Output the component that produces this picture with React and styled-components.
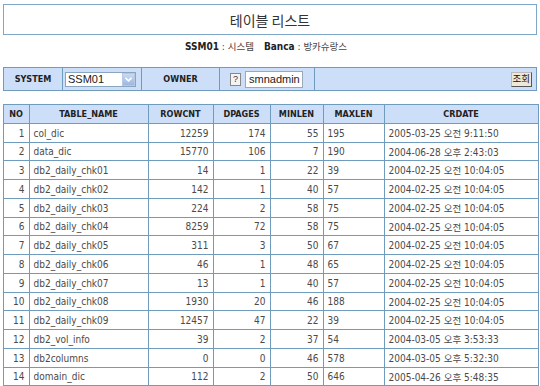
import React from "react";
import styled, { createGlobalStyle } from "styled-components";

const Global = createGlobalStyle`
  html, body { margin: 0; padding: 0; background: #fff; }
  body { font-family: "DejaVu Sans Condensed", "DejaVu Sans", "Noto Sans CJK KR", sans-serif; font-stretch: condensed; color: #333; }
`;

const Page = styled.div`
  padding: 4px 3px 0 3px;
  width: 534px;
`;

const TitleBox = styled.div`
  height: 29px;
  border: 1px solid #7ea6c6;
  display: flex;
  align-items: center;
  justify-content: center;
  font-family: "Noto Sans CJK KR", sans-serif;
  font-size: 14px;
  color: #333;
`;

const Sub = styled.div`
  height: 20px;
  margin-top: 1px;
  display: flex;
  align-items: center;
  justify-content: center;
  font-size: 10px;
  color: #444;
  padding-right: 8px;
  gap: 10px;
`;

const SubItem = styled.span`
  white-space: pre;
  b { font-weight: bold; color: #222; }
  span { font-family: "Noto Sans CJK KR", sans-serif; font-size: 9.5px; }
`;

const Bar = styled.div`
  margin-top: 11px;
  height: 22px;
  border: 1px solid #6f9bbd;
  background: #cddff8;
  display: grid;
  grid-template-columns: 58px 79px 78px 95px 1fr;
`;

const BarCell = styled.div`
  border-left: ${(p) => (p.$first ? "none" : "1px solid #6f9bbd")};
  display: flex;
  align-items: center;
  justify-content: ${(p) => p.$justify || "flex-start"};
  padding: ${(p) => p.$pad || "0"};
  font-size: 9px;
  font-weight: bold;
  color: #222;
  gap: 4px;
`;

const Select = styled.div`
  width: 71px;
  height: 15px;
  border: 1px solid #8aa5bd;
  background: #fff;
  display: flex;
  align-items: center;
  justify-content: space-between;
  font-family: "Liberation Sans", sans-serif;
  font-weight: normal;
  font-size: 11px;
  color: #222;
  padding-left: 2px;
  box-sizing: border-box;
`;

const DropBtn = styled.span`
  width: 13px;
  height: 13px;
  background: linear-gradient(#c9d9f2, #9db8e0);
  border: 1px solid #b5c8e6;
  box-sizing: border-box;
  display: flex;
  align-items: center;
  justify-content: center;
`;

const QIcon = styled.span`
  width: 11px;
  height: 13px;
  border: 1px solid #888;
  box-sizing: border-box;
  background: #f4f4f4;
  font-family: "Liberation Sans", sans-serif;
  font-weight: normal;
  font-size: 9px;
  line-height: 11px;
  text-align: center;
  color: #333;
`;

const Input = styled.div`
  width: 58px;
  height: 17px;
  box-sizing: border-box;
  border: 1px solid #9aa9b8;
  background: #fff;
  font-family: "Liberation Sans", sans-serif;
  font-weight: normal;
  font-size: 11px;
  color: #222;
  padding-left: 3px;
  display: flex;
  align-items: center;
`;

const Button = styled.span`
  box-sizing: border-box;
  height: 15px;
  padding: 0 1px;
  display: inline-flex;
  align-items: center;
  border: 1px solid #555;
  border-top-color: #bbb;
  border-left-color: #bbb;
  background: #ece9d8;
  font-family: "Noto Sans CJK KR", sans-serif;
  font-weight: normal;
  font-size: 9.5px;
  line-height: 1;
  color: #111;
`;

const Table = styled.table`
  margin-top: 13px;
  width: 535px;
  border-collapse: collapse;
  table-layout: fixed;
  margin-left: -0.5px;
`;

const Th = styled.th`
  height: 18px;
  padding: 0;
  border: 1px solid #6f9bbd;
  background: #cddff8;
  font-size: 9px;
  font-weight: bold;
  color: #222;
  text-align: center;
`;

const Row = styled.tr`
  height: ${(p) => (p.$tight ? "18px" : "19px")};
`;

const Td = styled.td`
  padding: 0 4px;
  border: 1px solid #6f9bbd;
  font-size: 10px;
  color: #4a4a4a;
  white-space: nowrap;
  overflow: hidden;
  text-align: ${(p) => (p.$right ? "right" : "left")};
`;

const Ko = styled.span`
  font-family: "Noto Sans CJK KR", sans-serif;
  font-size: 9.5px;
`;

const rows = [
  ["col_dic", 12259, 174, 55, 195, "2005-03-25", "오전", "9:11:50"],
  ["data_dic", 15770, 106, 7, 190, "2004-06-28", "오후", "2:43:03"],
  ["db2_daily_chk01", 14, 1, 22, 39, "2004-02-25", "오전", "10:04:05"],
  ["db2_daily_chk02", 142, 1, 40, 57, "2004-02-25", "오전", "10:04:05"],
  ["db2_daily_chk03", 224, 2, 58, 75, "2004-02-25", "오전", "10:04:05"],
  ["db2_daily_chk04", 8259, 72, 58, 75, "2004-02-25", "오전", "10:04:05"],
  ["db2_daily_chk05", 311, 3, 50, 67, "2004-02-25", "오전", "10:04:05"],
  ["db2_daily_chk06", 46, 1, 48, 65, "2004-02-25", "오전", "10:04:05"],
  ["db2_daily_chk07", 13, 1, 40, 57, "2004-02-25", "오전", "10:04:05"],
  ["db2_daily_chk08", 1930, 20, 46, 188, "2004-02-25", "오전", "10:04:05"],
  ["db2_daily_chk09", 12457, 47, 22, 39, "2004-02-25", "오전", "10:04:05"],
  ["db2_vol_info", 39, 2, 37, 54, "2004-03-05", "오후", "3:53:33"],
  ["db2columns", 0, 0, 46, 578, "2004-03-05", "오후", "5:32:30"],
  ["domain_dic", 112, 2, 50, 646, "2005-04-26", "오후", "5:48:35"],
  ["domain_info", 96, 2, 40, 120, "2005-04-26", "오후", "5:50:12"],
];

const cols = [26, 119, 65, 57, 53, 61, 154];

export default function App() {
  return (
    <>
      <Global />
      <Page>
        <TitleBox>테이블 리스트</TitleBox>
        <Sub>
          <SubItem><b>SSM01</b> : <span>시스템</span></SubItem>
          <SubItem><b>Banca</b> : <span>방카슈랑스</span></SubItem>
        </Sub>
        <Bar>
          <BarCell $first $justify="center">SYSTEM</BarCell>
          <BarCell $pad="0 0 0 2px">
            <Select>
              SSM01
              <DropBtn>
                <svg width="7" height="5" viewBox="0 0 7 5">
                  <path d="M0.5 0.8 L3.5 3.8 L6.5 0.8" fill="none" stroke="#fff" strokeWidth="1.6" />
                </svg>
              </DropBtn>
            </Select>
          </BarCell>
          <BarCell $justify="center">OWNER</BarCell>
          <BarCell $pad="0 0 0 10px">
            <QIcon>?</QIcon>
            <Input>smnadmin</Input>
          </BarCell>
          <BarCell $justify="flex-end" $pad="0 4px 0 0">
            <Button>조회</Button>
          </BarCell>
        </Bar>
        <Table>
          <colgroup>
            {cols.map((w, i) => (
              <col key={i} style={{ width: w }} />
            ))}
          </colgroup>
          <thead>
            <tr>
              <Th>NO</Th>
              <Th>TABLE_NAME</Th>
              <Th>ROWCNT</Th>
              <Th>DPAGES</Th>
              <Th>MINLEN</Th>
              <Th>MAXLEN</Th>
              <Th>CRDATE</Th>
            </tr>
          </thead>
          <tbody>
            {rows.map((r, i) => (
              <Row key={i} $tight={i % 4 === 1}>
                <Td $right>{i + 1}</Td>
                <Td>{r[0]}</Td>
                <Td $right>{r[1]}</Td>
                <Td $right>{r[2]}</Td>
                <Td $right>{r[3]}</Td>
                <Td>{r[4]}</Td>
                <Td>
                  {r[5]} <Ko>{r[6]}</Ko> {r[7]}
                </Td>
              </Row>
            ))}
          </tbody>
        </Table>
      </Page>
    </>
  );
}
